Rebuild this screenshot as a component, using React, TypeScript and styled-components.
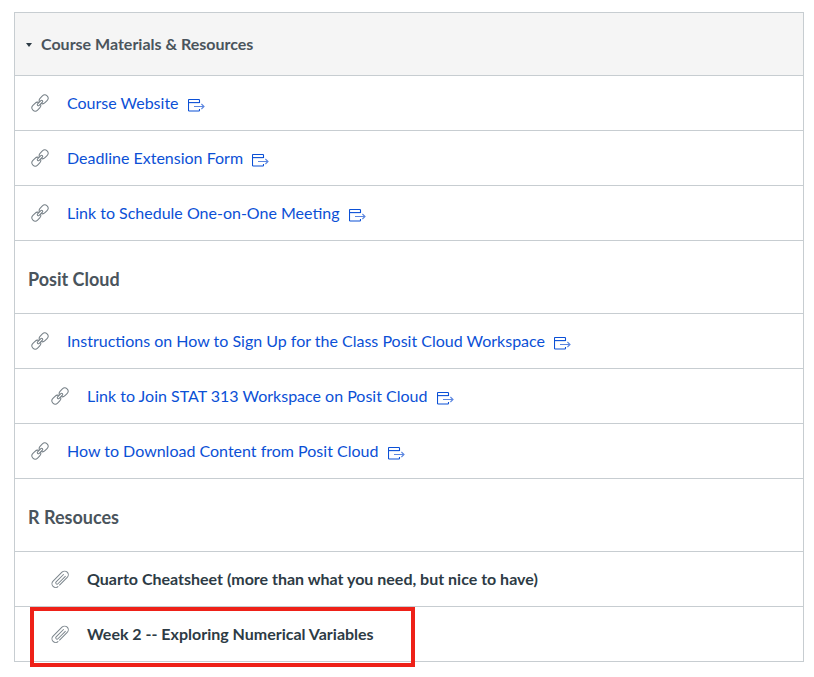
import React from 'react';
import styled, { createGlobalStyle } from 'styled-components';

const GlobalStyle = createGlobalStyle`
  html, body {
    margin: 0;
    padding: 0;
    background: #fff;
    font-family: Lato, "Open Sans", sans-serif;
  }
`;

type Entry =
  | { kind: 'link'; title: string; indent?: boolean }
  | { kind: 'heading'; title: string }
  | { kind: 'file'; title: string };

const entries: Entry[] = [
  { kind: 'link', title: 'Course Website' },
  { kind: 'link', title: 'Deadline Extension Form' },
  { kind: 'link', title: 'Link to Schedule One-on-One Meeting' },
  { kind: 'heading', title: 'Posit Cloud' },
  { kind: 'link', title: 'Instructions on How to Sign Up for the Class Posit Cloud Workspace' },
  { kind: 'link', title: 'Link to Join STAT 313 Workspace on Posit Cloud', indent: true },
  { kind: 'link', title: 'How to Download Content from Posit Cloud' },
  { kind: 'heading', title: 'R Resouces' },
  { kind: 'file', title: 'Quarto Cheatsheet (more than what you need, but nice to have)' },
  { kind: 'file', title: 'Week 2 -- Exploring Numerical Variables' },
];

function LinkIcon() {
  return (
    <svg width="18" height="18" viewBox="0 0 18 18" fill="none" stroke="#757f86" strokeWidth="1">
      <g transform="rotate(-45 9 9)">
        <rect x="-1" y="5.7" width="9.6" height="6.6" rx="3.3" />
        <rect x="9.4" y="5.7" width="9.6" height="6.6" rx="3.3" />
        <rect x="5.6" y="7.9" width="6.8" height="2.2" rx="1.1" fill="#fff" />
      </g>
    </svg>
  );
}

function ClipIcon() {
  return (
    <svg width="18" height="18" viewBox="0 0 18 18" fill="none" stroke="#7b858c" strokeWidth="1">
      <g transform="rotate(-45 9 9)">
        <path d="M4 13H15.2a3.7 3.7 0 0 0 0-7.4H2.6a3.7 3.7 0 0 0 0 7.4" />
        <path d="M15 10.9H4.2a1.2 1.2 0 0 1 0-2.6H15" />
      </g>
    </svg>
  );
}

function ExternalIcon() {
  return (
    <ExternalSvg width="17" height="13" viewBox="0 0 17 13" fill="none" stroke="#0b50d6" strokeWidth="1.1">
      <path d="M11.5 4V1.2a.7.7 0 0 0-.7-.7H1.2a.7.7 0 0 0-.7.7v10.1a.7.7 0 0 0 .7.7h9.6a.7.7 0 0 0 .7-.7V10" />
      <path d="M.5 3.6h11" />
      <path d="M6 7.5h10M13.4 5l2.6 2.5-2.6 2.5" stroke="#5b86e0" />
    </ExternalSvg>
  );
}

function App() {
  return (
    <Page>
      <GlobalStyle />
      <Module>
        <ModuleHeader>
          <Caret />
          <ModuleTitle>Course Materials &amp; Resources</ModuleTitle>
        </ModuleHeader>
        {entries.map((entry) => {
          if (entry.kind === 'heading') {
            return (
              <SubHeader key={entry.title}>
                <SubTitle>{entry.title}</SubTitle>
              </SubHeader>
            );
          }
          const indent = entry.kind === 'file' || (entry.kind === 'link' && entry.indent);
          return (
            <Row key={entry.title} $indent={!!indent}>
              <IconSlot>{entry.kind === 'link' ? <LinkIcon /> : <ClipIcon />}</IconSlot>
              {entry.kind === 'link' ? (
                <ItemLink>
                  {entry.title}
                  <ExternalIcon />
                </ItemLink>
              ) : (
                <FileTitle>{entry.title}</FileTitle>
              )}
            </Row>
          );
        })}
        <Highlight />
      </Module>
    </Page>
  );
}

const Page = styled.div`
  box-sizing: border-box;
  min-height: 677px;
  padding: 12px 0 0 14px;
`;

const Module = styled.div`
  position: relative;
  box-sizing: border-box;
  width: 790px;
  border: 1px solid #c7cdd1;
  border-bottom: none;
`;

const ModuleHeader = styled.div`
  display: flex;
  align-items: center;
  box-sizing: border-box;
  height: 63px;
  padding: 0 0 1px 11px;
  background: #f5f5f5;
  border-bottom: 1px solid #c7cdd1;
`;

const Caret = styled.span`
  width: 0;
  height: 0;
  margin: 2px 9px 0 0;
  border-left: 3.5px solid transparent;
  border-right: 3.5px solid transparent;
  border-top: 4.5px solid #2d3b45;
`;

const ModuleTitle = styled.h2`
  margin: 0;
  font-size: 16px;
  font-weight: 700;
  color: #4a545c;
`;

const SubHeader = styled.div`
  display: flex;
  align-items: center;
  box-sizing: border-box;
  height: 73px;
  padding: 4px 0 0 13px;
  border-bottom: 1px solid #c7cdd1;
`;

const SubTitle = styled.h3`
  margin: 0;
  font-size: 18px;
  font-weight: 700;
  color: #4a545c;
`;

const Row = styled.div<{ $indent: boolean }>`
  display: flex;
  align-items: center;
  box-sizing: border-box;
  height: 55px;
  padding: 0 0 2px ${({ $indent }) => ($indent ? '36px' : '16px')};
  border-bottom: 1px solid #c7cdd1;
`;

const IconSlot = styled.span`
  display: flex;
  flex: none;
  width: 36px;
  margin-top: 2px;
`;

const ItemLink = styled.a`
  display: inline-flex;
  align-items: center;
  gap: 9.4px;
  font-size: 16px;
  color: #0b50d6;
  cursor: pointer;
`;

const ExternalSvg = styled.svg`
  flex: none;
  margin-top: 6px;
`;

const FileTitle = styled.span`
  font-size: 16px;
  font-weight: 700;
  color: #2d3b45;
`;

const Highlight = styled.div`
  position: absolute;
  left: 15px;
  bottom: -5px;
  width: 385px;
  height: 60px;
  box-sizing: border-box;
  border: 4px solid #ee2118;
  pointer-events: none;
`;

export default App;
